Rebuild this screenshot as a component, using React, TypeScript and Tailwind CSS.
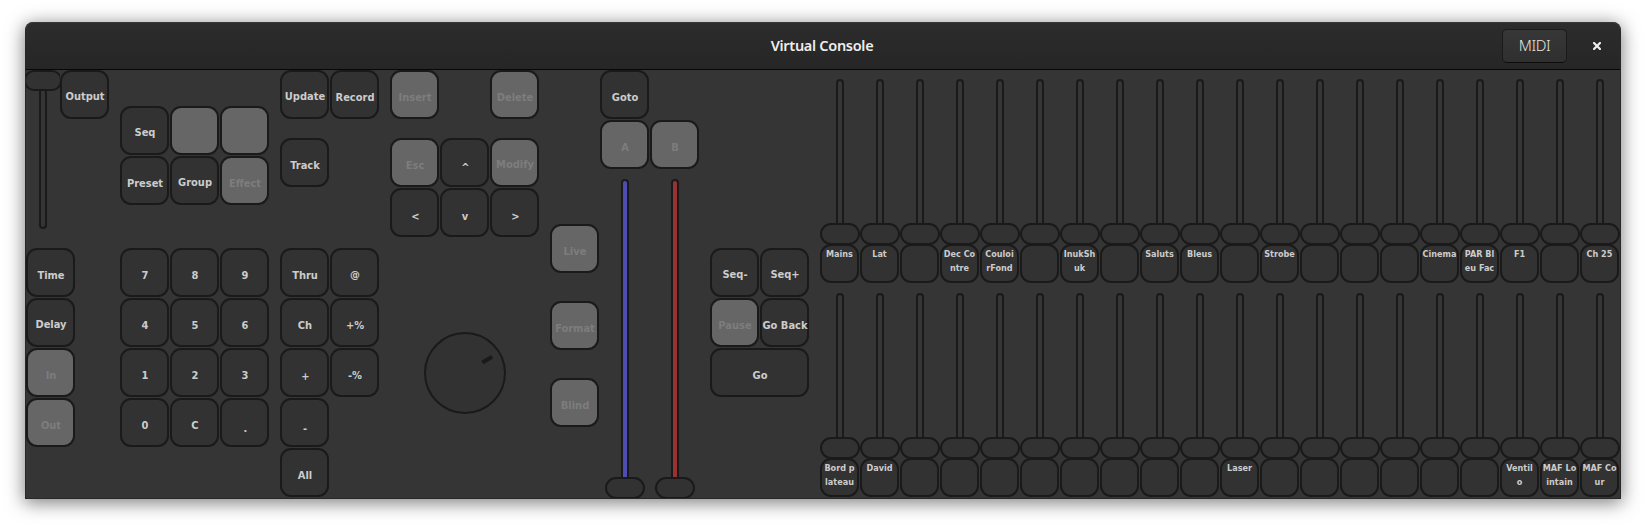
import React from "react";
import clsx from "clsx";

type KeyProps = {
  label?: string;
  off?: boolean;
  wide?: boolean;
  pad?: string;
};

function Key({ label = "", off = false, wide = false, pad }: KeyProps) {
  const descends = /[pqy]/.test(label);
  return (
    <div className={clsx("h-[50px] shrink-0", wide ? "w-[100px]" : "w-[50px]")}>
      <button
        className={clsx(
          "flex h-[49px] justify-center rounded-[11px] border-2 border-[#1a1a1a] whitespace-nowrap text-[11px] leading-[14px] font-bold [font-stretch:condensed]",
          wide ? "w-[99px]" : "w-[49px]",
          off ? "bg-[#666666] text-[#7d7d7d]" : "bg-[#323232] text-[#cccccc]",
          pad ?? (descends ? "pt-[18px]" : "pt-[19px]"),
        )}
      >
        <span className="relative left-[0.5px]">{label}</span>
      </button>
    </div>
  );
}

function Blank() {
  return <div className="h-[50px] w-[50px] shrink-0" />;
}

function Crossfader({ fill }: { fill: string }) {
  return (
    <div className="flex w-[50px] flex-col items-center">
      <div className={clsx("h-[298px] w-[8px] rounded-t-[4px] border-2 border-b-0 border-[#1a1a1a]", fill)} />
      <div className="h-[22px] w-[40px] shrink-0 rounded-[11px] border-2 border-[#1a1a1a] bg-[#323232]" />
    </div>
  );
}

function Channel({ lines }: { lines: string[] }) {
  return (
    <div className="flex w-[40px] shrink-0 flex-col items-center">
      <div className="h-[144px] w-[8px] rounded-t-[4px] border-2 border-b-0 border-[#1a1a1a]" />
      <div className="h-[22px] w-[40px] shrink-0 rounded-[11px] border-2 border-[#1a1a1a] bg-[#323232]" />
      <div className="-mt-px mr-px flex h-[39px] w-[39px] shrink-0 flex-col items-center rounded-[11px] border-2 border-[#1a1a1a] bg-[#323232] pt-[1px] text-[9px] leading-[14px] font-bold whitespace-nowrap text-[#cccccc] [font-stretch:condensed]">
        {lines.map((line) => (
          <span key={line}>{line}</span>
        ))}
      </div>
    </div>
  );
}

const upper: string[][] = [
  ["Mains"], ["Lat"], [], ["Dec Co", "ntre"], ["Couloi", "rFond"], [], ["InukSh", "uk"], [], ["Saluts"], ["Bleus"],
  [], ["Strobe"], [], [], [], ["Cinema"], ["PAR Bl", "eu Fac"], ["F1"], [], ["Ch 25"],
];

const lower: string[][] = [
  ["Bord p", "lateau"], ["David"], [], [], [], [], [], [], [], [],
  ["Laser"], [], [], [], [], [], [], ["Ventil", "o"], ["MAF Lo", "intain"], ["MAF Co", "ur"],
];

function Header() {
  return (
    <header className="grid h-[48px] shrink-0 grid-cols-[1fr_auto_1fr] items-center rounded-t-[8px] border-t border-b border-t-[#383838] border-b-[#070707] bg-linear-to-b from-[#2c2c2c] to-[#262626] font-['Noto_Sans','Open_Sans',sans-serif]">
      <div />
      <h1 className="mr-[2px] pb-[2px] text-[14.5px] leading-[20px] font-semibold tracking-[-0.3px] text-[#eeeeec]">Virtual Console</h1>
      <div className="flex items-center justify-end pr-[19px]">
        <button className="flex h-[34px] w-[65px] items-center justify-center rounded-[5px] border border-[#1b1b1b] border-b-[#0c0c0c] bg-linear-to-b from-[#373737] to-[#2f2f2f] pb-[2px] text-[15px] font-light tracking-[-0.4px] text-[#e6e6e4]">
          MIDI
        </button>
        <button className="ml-[26px] size-[8px]" aria-label="Close">
          <svg viewBox="0 0 8 8" className="size-[8px]">
            <path d="M1 1L7 7M7 1L1 7" stroke="#eeeeec" strokeWidth="2.2" strokeLinecap="square" />
          </svg>
        </button>
      </div>
    </header>
  );
}

export default function App() {
  return (
    <div className="h-[527px] w-[1646px] overflow-hidden bg-white pt-[22px] pl-[25px]">
      <div className="flex h-[477px] w-[1596px] flex-col rounded-t-[8px] border border-t-0 border-[#282828] bg-[#353535] shadow-[0_3px_18px_1px_rgba(0,0,0,0.5)]">
        <Header />
        <main className="flex h-[428px] w-[1594px] overflow-hidden font-['DejaVu_Sans_Condensed','DejaVu_Sans',sans-serif]">
          <section className="w-[94px] shrink-0">
            <div className="flex h-[178px]">
              <div className="flex w-[34px] shrink-0 flex-col items-center overflow-hidden">
                <div className="-mx-[2px] h-[21px] w-[38px] shrink-0 rounded-[10px] border-2 border-[#1a1a1a] bg-[#323232]" />
                <div className="h-[138px] w-[8px] shrink-0 rounded-b-[4px] border-2 border-t-0 border-[#1a1a1a]" />
              </div>
              <Key label="Output" />
            </div>
            <Key label="Time" />
            <Key label="Delay" />
            <Key label="In" off />
            <Key label="Out" off />
          </section>

          <section className="w-[150px] shrink-0 pt-[36px]">
            <div className="grid grid-cols-3">
              <Key label="Seq" />
              <Key off />
              <Key off />
              <Key label="Preset" />
              <Key label="Group" />
              <Key label="Effect" off />
            </div>
            <div className="mt-[42px] grid grid-cols-3">
              {["7", "8", "9", "4", "5", "6", "1", "2", "3", "0", "C"].map((k) => (
                <Key key={k} label={k} />
              ))}
              <Key label="." pad="pt-[22px] pl-[1px]" />
            </div>
          </section>

          <section className="ml-[10px] w-[100px] shrink-0">
            <div className="flex">
              <Key label="Update" />
              <Key label="Record" />
            </div>
            <div className="mt-[18px] mb-[60px]">
              <Key label="Track" />
            </div>
            <div className="grid grid-cols-2">
              <Key label="Thru" />
              <Key label="@" pad="pt-[18px]" />
              <Key label="Ch" />
              <Key label="+%" />
              <Key label="+" pad="pt-[20px] pl-[1px]" />
              <Key label="-%" />
              <Key label="-" pad="pt-[22px]" />
              <Blank />
              <Key label="All" />
            </div>
          </section>

          <section className="ml-[10px] w-[150px] shrink-0">
            <div className="flex justify-between">
              <Key label="Insert" off />
              <Key label="Delete" off />
            </div>
            <div className="mt-[18px] grid grid-cols-3">
              <Key label="Esc" off />
              <Key label="^" pad="pt-[21px] pl-[1px]" />
              <Key label="Modify" off />
              <Key label="<" pad="pt-[20px] pl-[1px]" />
              <Key label="v" pad="pt-[20px]" />
              <Key label=">" pad="pt-[20px] pl-[1px]" />
            </div>
            <svg viewBox="0 0 82 82" className="mt-[94px] ml-[34px] size-[82px]">
              <circle cx="41" cy="41" r="40" fill="#323232" stroke="#1a1a1a" strokeWidth="2" />
              <path d="M58.4 30.4L68.1 24.8" stroke="#1a1a1a" strokeWidth="4" />
            </svg>
          </section>

          <section className="ml-[10px] flex w-[50px] shrink-0 flex-col gap-[27px] pt-[154px]">
            <Key label="Live" off />
            <Key label="Format" off />
            <Key label="Blind" off />
          </section>

          <section className="w-[100px] shrink-0">
            <Key label="Goto" />
            <div className="flex">
              <Key label="A" off />
              <Key label="B" off />
            </div>
            <div className="mt-[9px] flex">
              <Crossfader fill="bg-[#4d4db3]" />
              <Crossfader fill="bg-[#993333]" />
            </div>
          </section>

          <section className="ml-[10px] w-[100px] shrink-0 pt-[178px]">
            <div className="grid grid-cols-2">
              <Key label="Seq-" />
              <Key label="Seq+" />
              <Key label="Pause" off />
              <Key label="Go Back" />
            </div>
            <Key label="Go" wide />
          </section>

          <section className="ml-[10px] w-[800px] shrink-0">
            <div className="flex h-[214px] pt-[9px]">
              {upper.map((lines, i) => (
                <Channel key={i} lines={lines} />
              ))}
            </div>
            <div className="flex h-[214px] pt-[9px]">
              {lower.map((lines, i) => (
                <Channel key={i} lines={lines} />
              ))}
            </div>
          </section>
        </main>
      </div>
    </div>
  );
}
